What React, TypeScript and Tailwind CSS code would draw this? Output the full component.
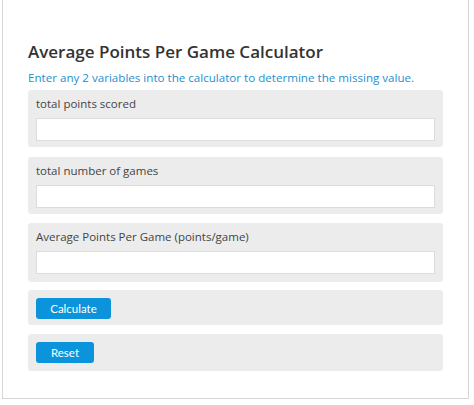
import { useState } from "react";

type Field = {
  key: string;
  label: string;
  className: string;
};

const fields: Field[] = [
  { key: "points", label: "total points scored", className: "h-[57px]" },
  { key: "games", label: "total number of games", className: "mt-[10px] h-[57px]" },
  { key: "ppg", label: "Average Points Per Game (points/game)", className: "mt-[9px] h-[59px]" },
];

export default function App() {
  const [values, setValues] = useState<Record<string, string>>({
    points: "",
    games: "",
    ppg: "",
  });

  const calculate = () => {
    const p = parseFloat(values.points);
    const g = parseFloat(values.games);
    const a = parseFloat(values.ppg);
    if (!isNaN(p) && !isNaN(g) && g !== 0) {
      setValues({ ...values, ppg: String(p / g) });
    } else if (!isNaN(p) && !isNaN(a) && a !== 0) {
      setValues({ ...values, games: String(p / a) });
    } else if (!isNaN(g) && !isNaN(a)) {
      setValues({ ...values, points: String(g * a) });
    }
  };

  const reset = () => setValues({ points: "", games: "", ppg: "" });

  return (
    <div className="h-[405px] w-[474px] bg-white font-['Open_Sans',sans-serif]">
      <div className="ml-[2px] h-[399px] w-[467px] border-x border-b border-[#d6d6d6] bg-white pl-[25px] pr-[25px] pt-[40px]">
        <h1 className="text-[17px] font-semibold leading-[24px] text-[#333]">
          Average Points Per Game Calculator
        </h1>
        <p className="mt-[5px] text-[11.6px] leading-[18px] text-[#1e90d0]">
          Enter any 2 variables into the calculator to determine the missing value.
        </p>

        <div className="mt-[3px] flex flex-col">
          {fields.map((f) => (
            <div key={f.key} className={`rounded-[3px] bg-[#ececec] px-[8px] pt-[5px] ${f.className}`}>
              <label className="block text-[11.5px] leading-[18px] text-[#444]">{f.label}</label>
              <input
                type="text"
                value={values[f.key]}
                onChange={(e) => setValues({ ...values, [f.key]: e.target.value })}
                className="mt-[5px] block h-[23px] w-full border border-[#dcdcdc] bg-white px-2 text-[12px] outline-none"
              />
            </div>
          ))}

          <div className="mt-[8px] h-[35px] rounded-[3px] bg-[#ececec] px-[8px] pt-[8px]">
            <button
              type="button"
              onClick={calculate}
              className="block h-[21px] w-[75px] rounded-[3px] bg-[#0b93dc] font-['Lato',sans-serif] text-[11.5px] text-white"
            >
              Calculate
            </button>
          </div>

          <div className="mt-[9px] h-[37px] rounded-[3px] bg-[#ececec] px-[8px] pt-[8px]">
            <button
              type="button"
              onClick={reset}
              className="block h-[21px] w-[58px] rounded-[3px] bg-[#0b93dc] font-['Lato',sans-serif] text-[11.5px] text-white"
            >
              Reset
            </button>
          </div>
        </div>
      </div>
    </div>
  );
}
